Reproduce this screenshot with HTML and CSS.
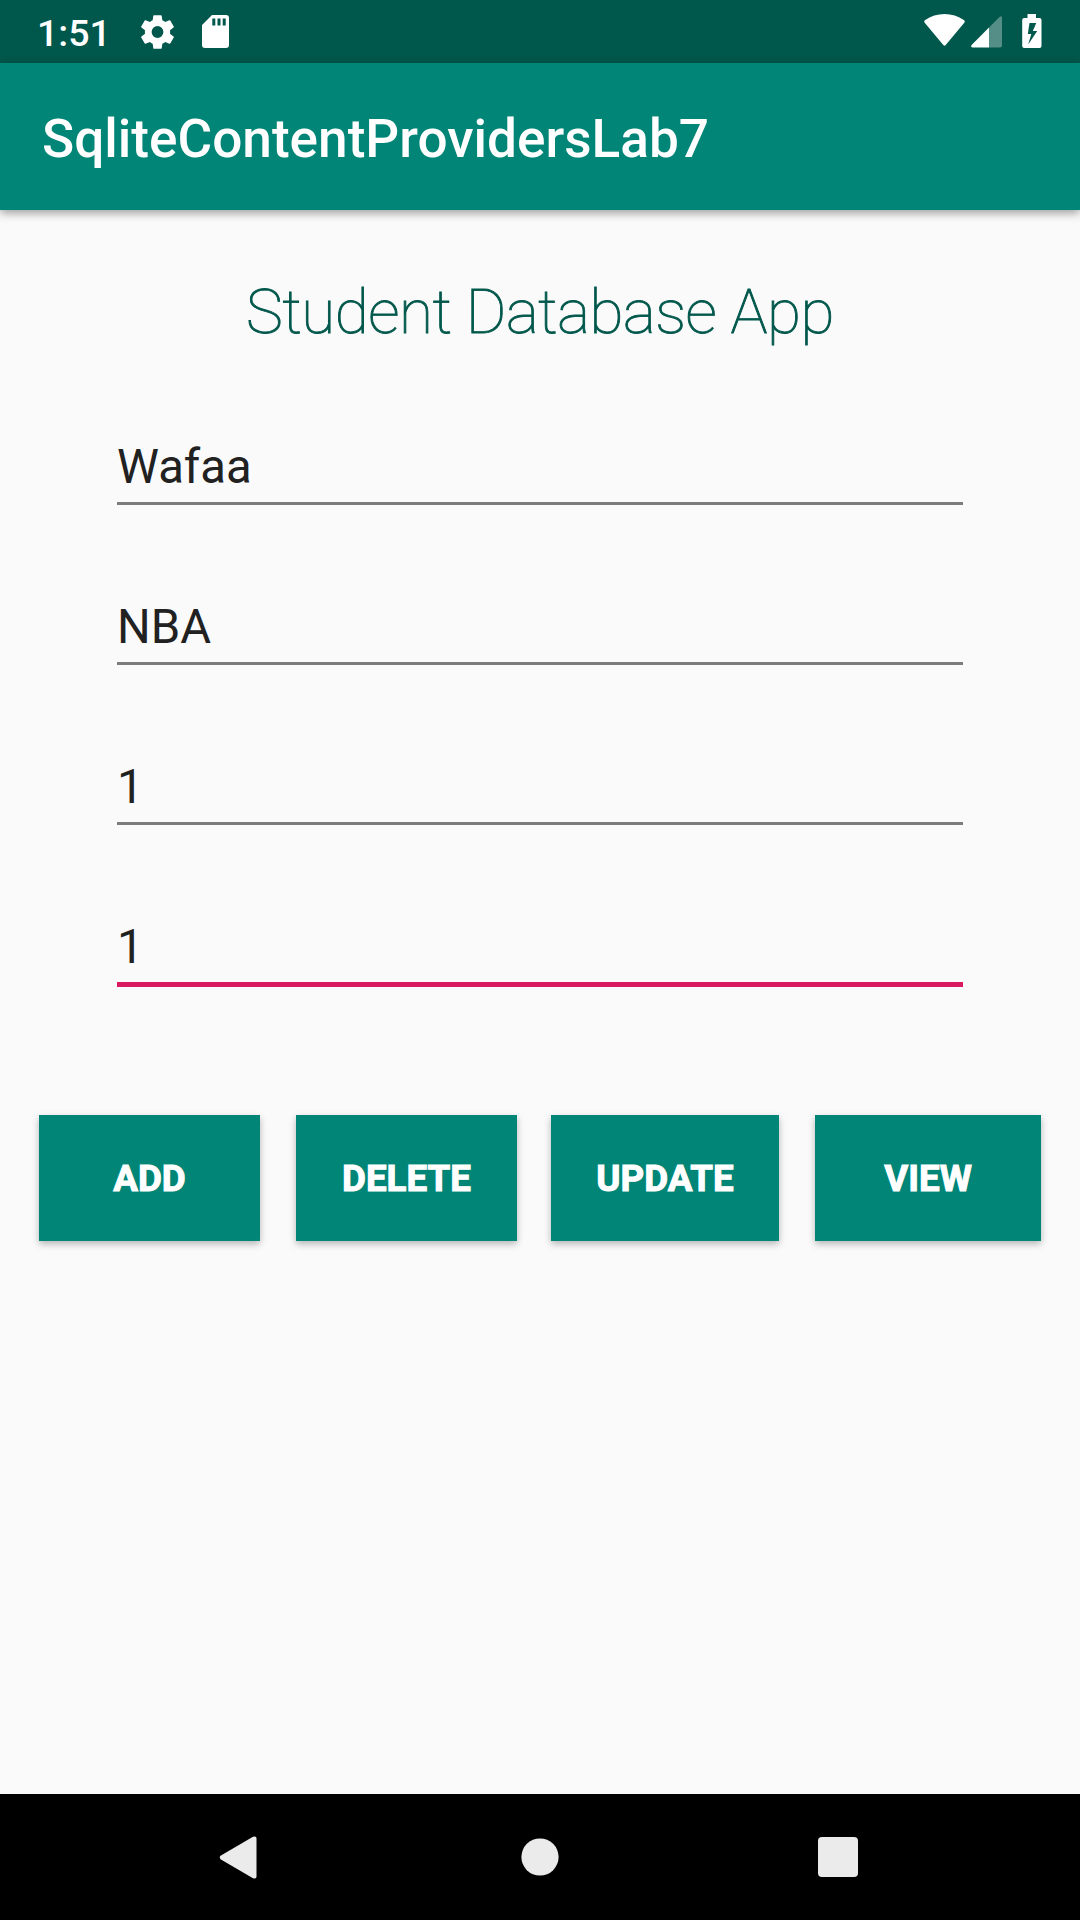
FILE: index.html
```html
<!DOCTYPE html>
<html lang="en">
<head>
<meta charset="utf-8">
<title>SqliteContentProvidersLab7</title>
<link rel="stylesheet" href="styles.css">
</head>
<body>
<div class="screen">
  <div class="status">
    <span class="clock">1:51</span>
    <svg class="gear" width="33" height="34" viewBox="2.2 2 19.6 20"><path d="M19.43 12.98c.04-.32.07-.64.07-.98s-.03-.66-.07-.98l2.11-1.65c.19-.15.24-.42.12-.64l-2-3.46c-.12-.22-.39-.3-.61-.22l-2.49 1c-.52-.4-1.08-.73-1.69-.98l-.38-2.65C14.46 2.18 14.25 2 14 2h-4c-.25 0-.46.18-.49.42l-.38 2.65c-.61.25-1.17.59-1.69.98l-2.49-1c-.23-.09-.49 0-.61.22l-2 3.46c-.13.22-.07.49.12.64l2.11 1.65c-.04.32-.07.65-.07.98s.03.66.07.98l-2.11 1.65c-.19.15-.24.42-.12.64l2 3.46c.12.22.39.3.61.22l2.49-1c.52.4 1.08.73 1.69.98l.38 2.65c.03.24.24.42.49.42h4c.25 0 .46-.18.49-.42l.38-2.65c.61-.25 1.17-.59 1.69-.98l2.49 1c.23.09.49 0 .61-.22l2-3.46c.12-.22.07-.49-.12-.64zM12 15.5A3.5 3.5 0 1 1 12 8.500a3.5 3.500 0 0 1 0 7z"/></svg>
    <svg class="card" width="27" height="33" viewBox="0 0 27 33"><path fill-rule="evenodd" d="M10 0h14a3 3 0 0 1 3 3v27a3 3 0 0 1-3 3H3a3 3 0 0 1-3-3V10zM10.300 3.500v7h3v-7zm5.200 0v7h3v-7zm5.200 0v7h3v-7z"/></svg>
    <span class="spacer"></span>
    <svg class="wifi" width="41" height="32" viewBox="0 0 41 32"><path d="M.7 8.700Q-.5 7.300 1.200 6C12-2 29-2 39.800 6Q41.500 7.300 40.300 8.700L21.700 31Q20.500 32.500 19.300 31z"/></svg>
    <svg class="signal" width="31" height="32" viewBox="0 0 31 32"><path opacity=".33" d="M31 2v27.500Q31 31.500 29 31.500H18V11.500L28.500 1Q31-.8 31 2z"/><path d="M18 11.500v20H1.500Q-.8 31 .6 29z"/></svg>
    <svg class="battery" width="20" height="34" viewBox="0 0 20 34"><path fill-rule="evenodd" d="M5.500 0h8.500v4h3.500Q19.500 4 19.500 6v26Q19.500 34 17.500 34H2.200Q.2 34 .2 32V6Q.2 4 2.200 4h3.300zM7.500 9L5.800 20h3.500L6.200 30.500 15.200 17H10.800L14.300 9z"/></svg>
  </div>
  <header class="appbar">SqliteContentProvidersLab7</header>
  <main class="content">
    <h1 class="heading">Student Database App</h1>
    <form class="fields">
      <div class="field">Wafaa</div>
      <div class="field">NBA</div>
      <div class="field">1</div>
      <div class="field focused">1</div>
    </form>
    <div class="buttons">
      <button class="button add">ADD</button>
      <button class="button delete">DELETE</button>
      <button class="button update">UPDATE</button>
      <button class="button view">VIEW</button>
    </div>
  </main>
  <nav class="navbar">
    <svg width="38" height="43" viewBox="0 0 38 43"><path d="M34 .8Q37.500-.5 37.500 2.500V40.500Q37.500 43.500 34 42.200L1.500 23.200Q0 21.500 1.500 19.800z"/></svg>
    <svg class="home" width="38" height="38" viewBox="0 0 38 38"><circle cx="19" cy="19" r="18.600"/></svg>
    <svg width="40" height="40" viewBox="0 0 40 40"><rect width="40" height="40" rx="4"/></svg>
  </nav>
</div>
</body>
</html>
```
FILE: styles.css
```css
body {
  margin: 0;
  font-family: Roboto, sans-serif;
  background: #fafafa;
}
.screen {
  width: 1080px;
  height: 1920px;
  display: flex;
  flex-direction: column;
  overflow: hidden;
}
.status {
  height: 63px;
  flex: none;
  display: flex;
  box-sizing: border-box;
  padding: 0 38px 0 37px;
  background: #00574b;
  color: #fff;
}
.status svg { fill: #fff; flex: none; }
.clock {
  width: 103.500px;
  font-size: 37.500px;
  line-height: 66px;
  font-weight: 500;
}
.gear, .card { margin-top: 15px; }
.card { margin-left: 28px; }
.spacer { flex: 1; }
.wifi { margin-top: 14px; }
.signal { margin: 15.500px 20px 0 6px; }
.battery { margin-top: 14px; }
.appbar {
  height: 147px;
  flex: none;
  box-sizing: border-box;
  padding-left: 42px;
  background: #008577;
  color: #fff;
  font-size: 53.150px;
  font-weight: 500;
  line-height: 152px;
  box-shadow: 0 3px 9px rgba(0, 0, 0, .38);
}
.content { flex: 1; }
.heading {
  margin: 0;
  padding-top: 57px;
  height: 121px;
  text-align: center;
  font-size: 62px;
  line-height: 90px;
  font-weight: 100;
  letter-spacing: -.5px;
  color: #00574b;
  -webkit-text-stroke: .9px #00574b;
}
.fields {
  margin: 0 117px;
  display: grid;
  grid-template-rows: repeat(4, 160px);
}
.field {
  height: 117px;
  box-sizing: border-box;
  padding-top: 51px;
  font-size: 47.250px;
  line-height: 56px;
  color: #212121;
  border-bottom: 3px solid #7c7c7c;
}
.field.focused {
  height: 119px;
  border-bottom: 5px solid #d81b60;
}
.buttons {
  margin: 87px 39px 0;
  display: flex;
}
.button {
  height: 126px;
  padding: 1px 0 0;
  border: 0;
  background: #008577;
  color: #fff;
  font: 700 36.750px Roboto, sans-serif;
  -webkit-text-stroke: 1px #fff;
  box-shadow: 0 3px 7px rgba(0, 0, 0, .28);
}
.add { width: 221px; }
.delete { width: 221px; margin: 0 34px 0 36px; }
.update { width: 228px; margin-right: 36px; }
.view { width: 226px; }
.navbar {
  height: 126px;
  flex: none;
  box-sizing: border-box;
  padding: 0 222px 0 219px;
  display: flex;
  align-items: center;
  justify-content: space-between;
  background: #000;
}
.navbar svg { fill: #ebebeb; }
.navbar .home { margin-left: 4px; }
```
